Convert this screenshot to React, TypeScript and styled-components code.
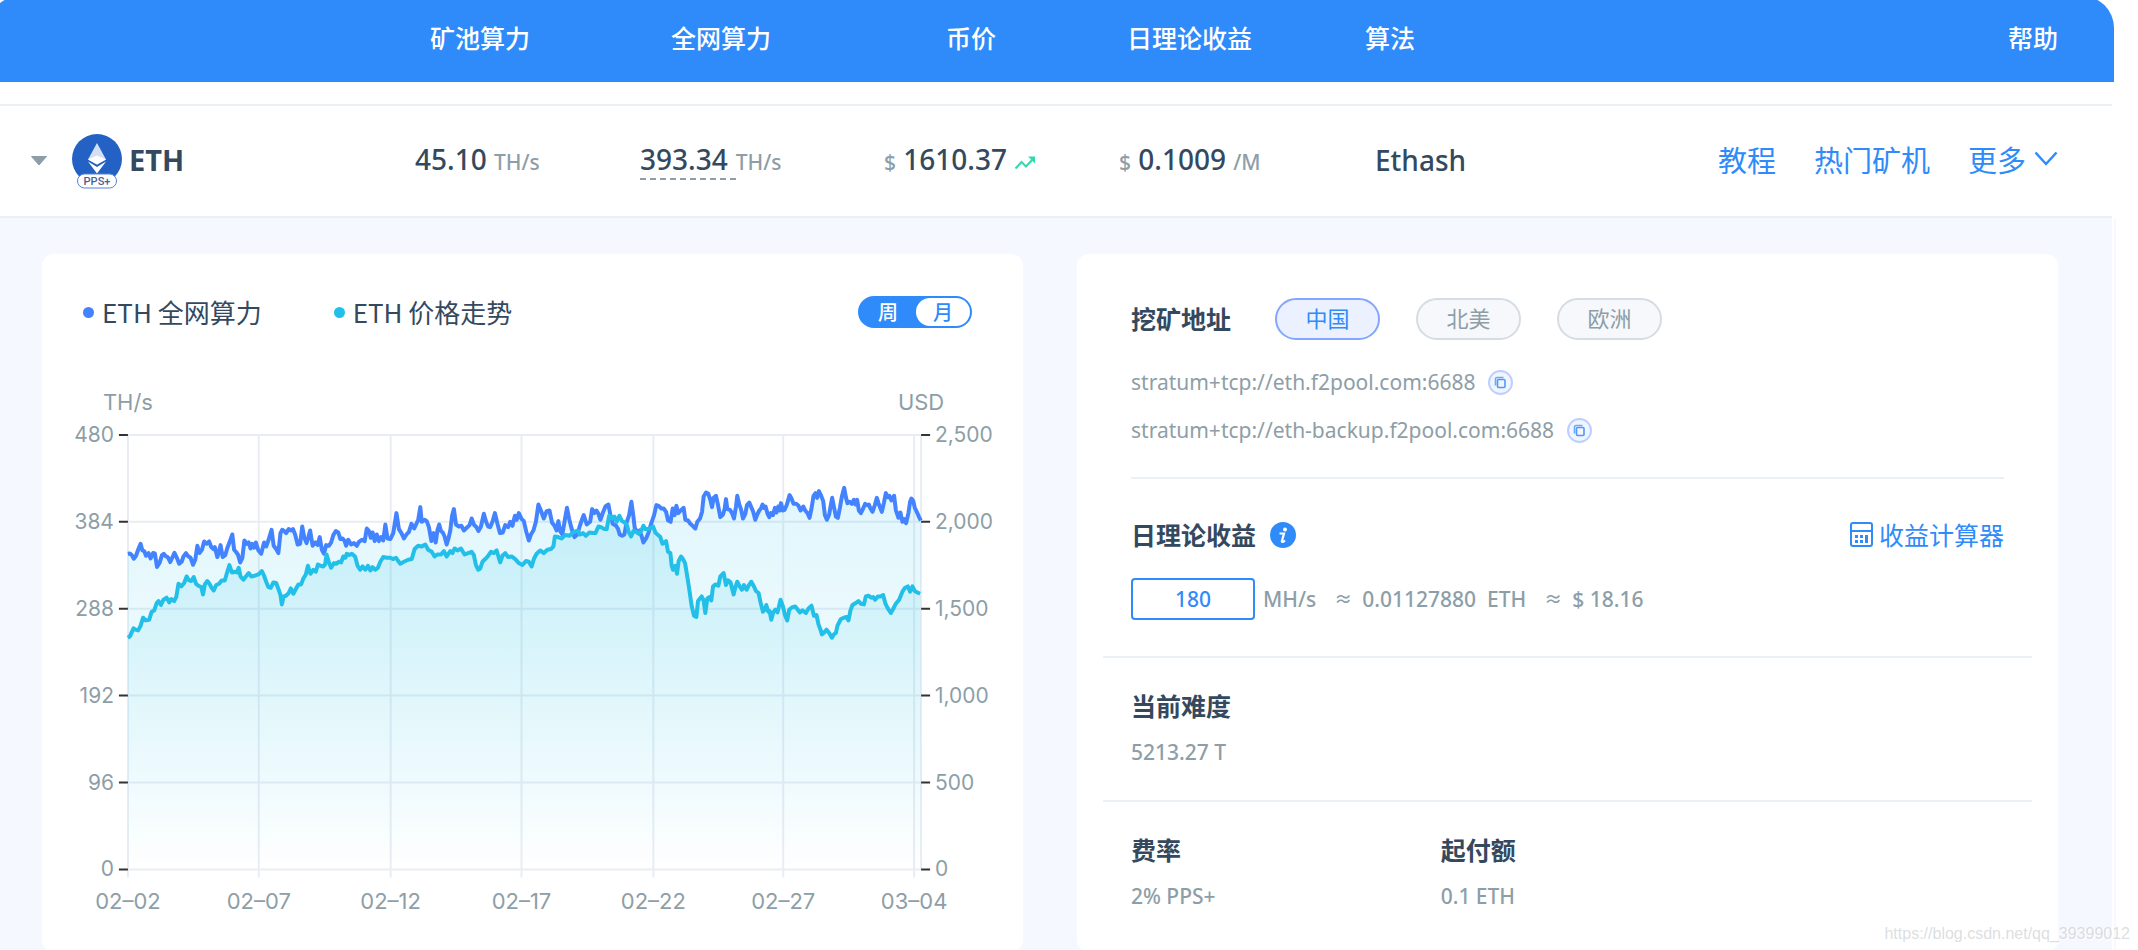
import React, { useState } from "react";
import styled, { createGlobalStyle } from "styled-components";

const latin = `"Noto Sans", "Noto Sans CJK SC", sans-serif`;
const han = `"Noto Sans CJK SC", "Noto Sans", sans-serif`;

const c = {
  blue: "#2f8bfa",
  ink: "#34495e",
  muted: "#8d9ea7",
  line: "#ebf0f4",
  bg: "#f5f8fe",
};

const Global = createGlobalStyle`
  * { box-sizing: border-box; }
  body { margin: 0; background: #fff; color: ${c.ink}; font-family: ${latin}; font-weight: 500; }
  button, input { font: inherit; margin: 0; }
  a { color: inherit; text-decoration: none; }
  h2, p { margin: 0; }
`;

const Page = styled.main`
  position: relative;
  overflow: hidden;
  padding-right: 24px;
`;

const PoolTable = styled.table`
  display: block;
  width: 100%;
`;

const Head = styled.thead`
  display: block;
  margin: -4px 0 0 -12px;
  padding-left: 12px;
  border-radius: 32px 32px 0 0;
  background: ${c.blue};
  color: #fff;
`;

const HeadRow = styled.tr`
  display: grid;
  grid-template-columns: 430fr 241fr 275fr 181fr 238fr 374fr 375fr;
  align-items: center;
  height: 86px;
`;

const HeadCell = styled.th<{ $end?: boolean }>`
  padding: ${(p) => (p.$end ? "0 56px 4px 0" : "0 0 4px")};
  text-align: ${(p) => (p.$end ? "right" : "left")};
  font: 500 25px/32px ${han};
  white-space: nowrap;
`;

const Body = styled.tbody`
  display: block;
  margin-right: 2px;
  padding-top: 22px;
`;

const CoinRow = styled.tr`
  display: grid;
  grid-template-columns: 415fr 225fr 244fr 235fr 256fr 300fr 437fr;
  align-items: center;
  height: 114px;
  border: solid ${c.line};
  border-width: 2px 0;
`;

const Cell = styled.td`
  padding: 0 0 2px;
  font-size: 28px;
  line-height: 36px;
  white-space: nowrap;
`;

const Unit = styled.span`
  color: ${c.muted};
  font-size: 21px;
`;

const Dashed = styled.span`
  padding-right: 8px;
  border-bottom: 2px dashed ${c.muted};
`;

const CoinCell = styled.td`
  display: flex;
  align-items: center;
  padding: 0 0 0 30px;
`;

const CaretButton = styled.button`
  display: flex;
  padding: 0;
  border: 0;
  background: none;
  cursor: pointer;
`;

const CoinLogo = styled.svg`
  margin: 2px 7px 0 24px;
`;

const CoinName = styled.b`
  padding-bottom: 2px;
  font-size: 29px;
  line-height: 36px;
`;

const LinkCell = styled.td`
  display: flex;
  justify-content: flex-end;
  gap: 38px;
  padding: 0 54px 4px 0;
  color: ${c.blue};
  font: 29px/40px ${han};
  white-space: nowrap;
`;

const MoreLink = styled.a`
  display: flex;
  align-items: center;
  gap: 8px;
`;

const Details = styled.section`
  display: grid;
  grid-template-columns: 1fr 1fr;
  gap: 54px;
  margin-right: 2px;
  padding: 36px 54px 0 42px;
  background: ${c.bg};
`;

const Edge = styled.div`
  box-shadow: 2px 0 0 #f6faff;
`;

const Card = styled.section`
  min-width: 0;
  border-radius: 12px;
  background: #fff;
`;

const ChartCard = styled(Card)`
  padding-top: 40px;
`;

const ChartHeader = styled.header`
  display: flex;
  align-items: center;
  gap: 72px;
  padding: 0 51px 0 41px;
`;

const Legend = styled.span<{ $dot: string }>`
  display: flex;
  align-items: center;
  gap: 8px;
  font: 26px/36px ${han};
  white-space: nowrap;

  &::before {
    width: 11px;
    height: 11px;
    border-radius: 50%;
    background: ${(p) => p.$dot};
    content: "";
  }
`;

const RangeSwitch = styled.div`
  display: flex;
  margin-left: auto;
  border: 2px solid ${c.blue};
  border-radius: 16px;
  background: ${c.blue};
`;

const RangeButton = styled.button<{ $on: boolean }>`
  width: ${(p) => (p.$on ? 54 : 56)}px;
  height: 28px;
  padding: 0;
  border: 0;
  border-radius: 14px;
  background: ${(p) => (p.$on ? "#fff" : c.blue)};
  color: ${(p) => (p.$on ? c.blue : "#fff")};
  font: 500 20px/28px ${han};
  cursor: pointer;
`;

const ChartSvg = styled.svg`
  display: block;
  width: 100%;
  height: auto;
  font-family: Inter, sans-serif;
  font-size: 21px;
  font-weight: 400;
  fill: ${c.muted};
`;

const InfoCard = styled(Card)`
  padding: 44px 26px 8px;
`;

const Block = styled.div`
  padding: 0 28px;
`;

const AddressBlock = styled.div`
  padding-bottom: 31px;
  border-bottom: 2px solid ${c.line};
`;

const Row = styled.div`
  display: flex;
  align-items: center;
`;

const Title = styled.h2`
  padding-bottom: 2px;
  font: 700 25px/34px ${han};
  white-space: nowrap;
`;

const Regions = styled.div`
  display: flex;
  gap: 36px;
  margin-left: 44px;
`;

const Pill = styled.button<{ $on: boolean }>`
  min-width: 105px;
  height: 42px;
  padding: 0 28px 4px;
  border: 2px solid ${(p) => (p.$on ? "#85a5ff" : "#d5dce4")};
  border-radius: 21px;
  background: ${(p) => (p.$on ? "#ebf1ff" : "#f7f8fb")};
  color: ${(p) => (p.$on ? c.blue : c.muted)};
  font: 22px/34px ${han};
  cursor: pointer;
`;

const Addresses = styled.div`
  display: grid;
  gap: 16px;
  margin-top: 26px;
`;

const Address = styled.div`
  display: flex;
  align-items: center;
  gap: 13px;
  color: ${c.muted};
  font-size: 21px;
  font-weight: 400;
  line-height: 32px;
  white-space: nowrap;
`;

const IconButton = styled.button`
  display: flex;
  padding: 0;
  border: 0;
  background: none;
  cursor: pointer;
`;

const ProfitHead = styled(Row)`
  gap: 14px;
  padding-top: 38px;
`;

const CalcLink = styled.a`
  display: flex;
  align-items: center;
  gap: 6px;
  margin-left: auto;
  color: ${c.blue};
  font: 25px/34px ${han};
  padding-bottom: 2px;
  white-space: nowrap;
`;

const Estimate = styled(Row)`
  margin: 25px 0 36px;
  color: ${c.muted};
  font-size: 21px;
  line-height: 32px;
  white-space: pre;
`;

const RateInput = styled.input`
  width: 124px;
  height: 42px;
  margin-right: 8px;
  border: 2px solid ${c.blue};
  border-radius: 4px;
  background: #fff;
  color: ${c.blue};
  text-align: center;
  outline: 0;
`;

const Approx = styled.span`
  margin: 0 10px 0 18px;
  font-size: 18px;
`;

const Facts = styled.div`
  display: grid;
  grid-template-columns: repeat(3, 1fr);
  border-top: 2px solid ${c.line};
`;

const Fact = styled.div`
  padding: 30px 28px 32px;
`;

const FactValue = styled.p`
  margin-top: 12px;
  color: ${c.muted};
  font-size: 21px;
  line-height: 32px;
`;

const Watermark = styled.span`
  position: absolute;
  right: 8px;
  bottom: 6px;
  color: rgba(190, 194, 200, 0.55);
  font: 400 16px/24px "Liberation Sans", sans-serif;
  text-shadow: 1px 1px 0 #fff;
`;

/* Chart data: x/y pairs in plot units, listed in two halves with their own x resolution. */
const hashrate = {
  early: "274,942 280,941 285,946 291,957 297,948 303,930 310,912 315,932 320,934 325,948 332,940 338,956 345,940 350,941 356,982 363,970 370,946 375,942 381,950 386,952 393,967 400,950 405,939 412,955 418,972 425,966 430,950 437,940 443,949 450,954 457,975 463,960 469,918 475,940 482,930 488,905 495,912 502,905 508,922 514,928 518,922 525,952 530,935 534,916 540,952 547,946 553,925 560,905 567,884 572,930 577,936 583,945 589,968 595,955 601,902 608,912 613,908 618,926 623,912 628,924 633,908 640,932 648,942 656,908 662,920 668,902 677,870 683,918 690,928 696,940 702,880 707,870 713,874 718,880 725,868 732,872 737,868 743,884 750,914 757,912 763,860 769,894 775,910 780,892 785,872 792,918 800,908 806,916 812,892 818,930 824,942 830,916 838,918 844,908 850,886 857,874 864,878 870,898 876,896 882,904 886,918 892,900 900,914 908,910 916,918 922,906 930,900 938,904 944,866 950,874 955,894 960,878 966,904 972,884 978,904 984,892 990,902 996,854 1002,896 1010,898 1018,880 1027,820 1034,868 1041,880 1048,896 1055,884 1062,876 1069,852 1077,866 1082,854 1088,840 1094,802 1098,846 1106,840 1112,844 1118,862 1125,904 1131,880 1137,908 1142,870 1147,854 1152,874 1157,878 1162,890 1168,914 1173,896 1178,872 1183,828 1188,808 1194,854 1202,860 1209,858 1216,872 1224,864 1232,856 1238,836 1245,856 1251,862 1257,874 1264,860 1272,822 1279,848 1284,860 1290,862 1296,846 1303,820 1310,852 1317,880 1325,878 1332,856 1340,862 1346,846 1352,858 1359,828 1364,840 1370,820 1378,838 1384,844 1391,876 1398,902 1404,884 1411,872 1418,846 1425,794 1432,812 1440,836 1448,814 1456,812 1463,848 1470,858 1476,872 1481,844 1486,874 1492,884 1498,846 1505,804 1511,836 1518,866 1526,892 1534,884 1541,858 1548,836",
  late: "73,826 82,854 92,846 98,808 105,820 111,812 117,822 123,840 130,820 138,800 147,794 153,826 160,852 170,858 176,868 181,884 188,888 195,884 201,850 209,826 216,786 222,830 226,864 234,878 241,872 248,894 252,908 260,896 267,880 275,852 284,826 291,796 298,798 306,806 313,806 320,816 326,842 334,846 340,806 346,826 351,798 357,820 364,812 373,804 378,840 386,842 393,852 400,858 408,866 414,846 422,836 428,816 433,770 440,758 447,762 453,780 458,802 463,774 470,768 477,800 483,832 491,824 496,808 500,778 504,808 512,810 518,820 524,836 530,800 534,768 540,794 545,808 551,836 558,822 563,796 570,788 575,800 581,814 588,840 594,824 600,812 605,806 610,794 614,804 619,800 625,822 630,832 635,820 641,826 647,804 652,818 657,800 662,812 665,790 671,812 676,810 683,794 691,766 697,776 703,792 711,792 718,798 724,812 732,800 738,812 745,820 751,834 757,806 763,768 769,760 774,774 779,754 785,766 792,784 797,826 803,840 810,824 815,794 819,774 824,800 830,830 836,834 842,804 848,770 855,744 860,772 865,790 872,786 878,792 884,780 889,794 894,780 899,812 905,820 912,806 918,792 924,796 929,794 934,806 940,816 947,796 953,774 960,796 968,816 974,790 980,760 986,772 991,768 997,782 1005,768 1010,810 1018,834 1024,818 1030,846 1036,838 1041,850 1048,820 1053,786 1057,776 1062,782 1067,804 1074,818 1080,832 1085,842",
};

const price = {
  early: "274,1194 280,1190 285,1178 290,1166 296,1170 303,1172 310,1158 317,1134 324,1142 334,1140 341,1116 348,1112 355,1090 360,1084 367,1096 374,1080 383,1074 390,1088 396,1078 404,1084 410,1072 416,1032 424,1040 432,1030 439,1010 446,1022 452,1024 459,1012 465,1032 472,1038 480,1042 485,1064 490,1034 497,1024 503,1032 509,1044 515,1052 522,1036 530,1032 537,1022 546,1022 552,1000 559,976 566,998 574,996 580,998 585,984 590,1010 598,1020 605,1010 613,1000 620,1010 630,1008 640,1004 650,994 656,1008 662,1026 668,1042 675,1044 682,1028 690,1030 697,1050 702,1066 706,1094 711,1070 718,1068 725,1060 731,1046 738,1062 745,1048 752,1034 760,1034 766,1016 773,1004 779,978 786,1002 794,990 801,996 807,974 814,978 822,980 827,974 831,944 838,968 844,984 852,970 858,972 866,966 872,968 878,950 884,954 888,942 895,946 902,942 911,950 918,978 925,990 932,980 940,990 947,978 954,992 960,982 967,990 975,984 982,966 990,952 1000,954 1010,954 1018,958 1026,954 1032,964 1038,972 1048,966 1060,960 1070,958 1078,928 1088,918 1098,920 1108,914 1116,930 1126,936 1134,950 1142,944 1152,944 1160,934 1168,950 1178,934 1184,940 1190,926 1198,932 1208,926 1218,944 1228,940 1238,936 1244,946 1250,976 1256,990 1262,986 1268,966 1276,958 1283,950 1292,936 1300,940 1308,932 1318,968 1324,948 1332,940 1340,952 1350,950 1360,958 1370,970 1380,976 1390,964 1398,966 1406,980 1413,956 1420,942 1430,932 1440,940 1450,930 1460,928 1467,920 1471,890 1480,892 1490,896 1500,886 1512,888 1522,878 1534,872 1542,884 1550,880 1558,888 1566,880",
  late: "90,878 100,880 108,880 117,860 125,862 135,868 142,868 149,828 158,836 165,830 172,846 180,828 188,844 196,848 203,858 208,876 215,890 222,874 230,876 238,882 245,874 252,858 258,868 266,868 274,864 281,860 288,878 296,886 303,892 309,912 320,904 326,936 333,940 337,978 341,990 348,978 353,1002 358,964 365,950 372,960 377,970 383,1006 390,1050 397,1098 404,1128 411,1132 416,1084 422,1076 427,1070 433,1082 438,1120 444,1076 450,1072 456,1082 461,1040 468,1034 477,1038 483,1010 493,1000 500,1036 506,1022 514,1028 523,1064 529,1040 534,1026 541,1040 548,1050 554,1036 562,1050 569,1036 576,1026 584,1040 590,1054 598,1060 604,1088 611,1116 617,1110 621,1096 627,1116 631,1114 636,1140 642,1118 648,1110 655,1118 664,1080 671,1100 677,1126 684,1142 690,1110 697,1104 708,1100 714,1108 722,1118 730,1112 740,1120 748,1106 757,1098 764,1128 772,1126 778,1154 784,1170 788,1184 795,1178 802,1170 810,1180 818,1194 824,1184 830,1180 835,1158 845,1138 855,1134 862,1132 868,1142 874,1112 880,1096 890,1090 898,1084 905,1092 914,1094 920,1070 928,1068 936,1074 942,1072 948,1080 956,1070 964,1070 972,1066 979,1092 986,1106 995,1120 1002,1108 1010,1092 1020,1080 1030,1056 1038,1044 1046,1040 1053,1056 1060,1040 1067,1054 1075,1058 1083,1062",
};

type Series = { early: string; late: string };

const half = (s: string, x0: number, unit: number) =>
  s.split(" ").map((p) => {
    const [x, y] = p.split(",").map(Number);
    return `${(x0 + x / unit).toFixed(1)},${(y / 3 - 90).toFixed(1)}`;
  });

const linePath = (s: Series) => "M" + [...half(s.early, -12, 2.8), ...half(s.late, 518, 3)].join("L");

const TOP = 105;
const STEP = 87;
const BOTTOM = TOP + STEP * 5;
const LEFT = 86;
const RIGHT = 880;

const leftTicks = ["480", "384", "288", "192", "96", "0"];
const rightTicks = ["2,500", "2,000", "1,500", "1,000", "500", "0"];
const days: [string, number][] = [
  ["02–02", 86],
  ["02–07", 217],
  ["02–12", 349],
  ["02–17", 480],
  ["02–22", 612],
  ["02–27", 742],
  ["03–04", 873],
];

function TrendChart() {
  const hash = linePath(hashrate);
  const usd = linePath(price);
  const close = `L${RIGHT},${BOTTOM}L${LEFT},${BOTTOM}Z`;
  return (
    <ChartSvg viewBox="0 0 982 618" role="img" aria-label="ETH 全网算力 / ETH 价格走势">
      <defs>
        <linearGradient id="hashFill" x1="0" y1="0" x2="0" y2="1">
          <stop offset="0" stopColor="#22c1e8" stopOpacity="0.14" />
          <stop offset="1" stopColor="#22c1e8" stopOpacity="0" />
        </linearGradient>
        <linearGradient id="usdFill" x1="0" y1="0" x2="0" y2="1">
          <stop offset="0" stopColor="#22c1e8" stopOpacity="0.16" />
          <stop offset="1" stopColor="#22c1e8" stopOpacity="0" />
        </linearGradient>
      </defs>
      <g stroke="#e9edf3" strokeWidth="2">
        {leftTicks.map((_, i) => (
          <path key={i} d={`M${LEFT} ${TOP + STEP * i}H${RIGHT}`} />
        ))}
        {days.map(([d, x]) => (
          <path key={d} d={`M${x} ${TOP}V${BOTTOM + 8}`} />
        ))}
        <path d={`M${RIGHT} ${TOP}V${BOTTOM}`} />
      </g>
      <g stroke="#333" strokeWidth="2">
        {leftTicks.map((_, i) => (
          <path key={i} d={`M${LEFT - 9} ${TOP + STEP * i}H${LEFT}M${RIGHT} ${TOP + STEP * i}h9`} />
        ))}
      </g>
      <path d={hash + close} fill="url(#hashFill)" />
      <path d={usd + close} fill="url(#usdFill)" />
      <path d={hash} fill="none" stroke="#4383ff" strokeWidth="4" strokeLinejoin="round" />
      <path d={usd} fill="none" stroke="#22bfe8" strokeWidth="4" strokeLinejoin="round" />
      <text x="86" y="80" textAnchor="middle" fontSize="22">TH/s</text>
      <text x="880" y="80" textAnchor="middle" fontSize="22">USD</text>
      {leftTicks.map((t, i) => (
        <text key={t} x="72" y={TOP + STEP * i + 7} textAnchor="end">{t}</text>
      ))}
      {rightTicks.map((t, i) => (
        <text key={t} x="894" y={TOP + STEP * i + 7}>{t}</text>
      ))}
      {days.map(([d, x]) => (
        <text key={d} x={x} y={BOTTOM + 40} textAnchor="middle" fontSize="22">{d}</text>
      ))}
    </ChartSvg>
  );
}

function EthLogo() {
  return (
    <CoinLogo width="50" height="56" viewBox="0 0 50 56" aria-hidden="true">
      <circle cx="25" cy="25" r="25" fill="#2362c4" />
      <path d="M25 9L16 25.500L25 30.500L34 25.500Z" fill="#d3dff2" />
      <path d="M16 25.500L25 21.500L34 25.500L25 30.500Z" fill="#fff" />
      <path d="M16 27.500L25 33L34 27.500L25 39.500Z" fill="#fff" />
      <rect x="5.500" y="40" width="39" height="14" rx="7" fill="#fff" stroke="#5484d0" />
      <text x="25" y="51" textAnchor="middle" fontSize="11" fontFamily="Roboto, sans-serif" fill="#4a5f8f">PPS+</text>
    </CoinLogo>
  );
}

function CopyIcon() {
  return (
    <svg width="25" height="25" viewBox="0 0 25 25" fill="none" aria-hidden="true">
      <circle cx="12.500" cy="12.500" r="11.500" fill="#f1f5ff" stroke="#bccfff" strokeWidth="2" />
      <path d="M7.500 15.500V9A1.500 1.500 0 0 1 9 7.500H15.500" stroke="#69abfb" strokeWidth="1.600" />
      <rect x="9.500" y="9.500" width="7.500" height="8" rx="1" stroke="#4c9bfb" strokeWidth="1.600" />
    </svg>
  );
}

const regions = ["中国", "北美", "欧洲"];
const addresses = ["stratum+tcp://eth.f2pool.com:6688", "stratum+tcp://eth-backup.f2pool.com:6688"];

export default function App() {
  const [region, setRegion] = useState("中国");
  const [range, setRange] = useState("月");
  const [rate, setRate] = useState("180");

  return (
    <Page>
      <Global />
      <PoolTable>
        <Head>
          <HeadRow>
            <HeadCell aria-label="币种" />
            <HeadCell>矿池算力</HeadCell>
            <HeadCell>全网算力</HeadCell>
            <HeadCell>币价</HeadCell>
            <HeadCell>日理论收益</HeadCell>
            <HeadCell>算法</HeadCell>
            <HeadCell $end>帮助</HeadCell>
          </HeadRow>
        </Head>
        <Body>
          <CoinRow>
            <CoinCell>
              <CaretButton type="button" aria-label="收起">
                <svg width="18" height="12" viewBox="0 0 18 12">
                  <path d="M1.500 1.500H16.500L9 10Z" fill={c.muted} stroke={c.muted} strokeLinejoin="round" />
                </svg>
              </CaretButton>
              <EthLogo />
              <CoinName>ETH</CoinName>
            </CoinCell>
            <Cell>45.10 <Unit>TH/s</Unit></Cell>
            <Cell><Dashed>393.34</Dashed><Unit>TH/s</Unit></Cell>
            <Cell>
              <Unit>$</Unit> 1610.37{" "}
              <svg width="22" height="14" viewBox="0 0 22 14" fill="none" aria-hidden="true">
                <path d="M1.500 12.500L7.500 6L12 10.500L19 3" stroke="#35d8ae" strokeWidth="2" />
                <path d="M14 .5H21V7.500Z" fill="#35d8ae" />
              </svg>
            </Cell>
            <Cell><Unit>$</Unit> 0.1009 <Unit>/M</Unit></Cell>
            <Cell>Ethash</Cell>
            <LinkCell>
              <a href="#tutorial">教程</a>
              <a href="#miners">热门矿机</a>
              <MoreLink href="#more">
                更多
                <svg width="24" height="16" viewBox="0 0 24 16" fill="none" aria-hidden="true">
                  <path d="M1.500 1.500L12 13L22.500 1.500" stroke={c.blue} strokeWidth="2.500" />
                </svg>
              </MoreLink>
            </LinkCell>
          </CoinRow>
        </Body>
      </PoolTable>

      <Edge>
        <Details>
          <ChartCard>
            <ChartHeader>
              <Legend $dot="#4383ff">ETH 全网算力</Legend>
              <Legend $dot="#22bfe8">ETH 价格走势</Legend>
              <RangeSwitch>
                {["周", "月"].map((r) => (
                  <RangeButton key={r} type="button" $on={r === range} aria-pressed={r === range} onClick={() => setRange(r)}>
                    {r}
                  </RangeButton>
                ))}
              </RangeSwitch>
            </ChartHeader>
            <TrendChart />
          </ChartCard>

          <InfoCard>
            <Block>
              <AddressBlock>
                <Row>
                  <Title>挖矿地址</Title>
                  <Regions>
                    {regions.map((r) => (
                      <Pill key={r} type="button" $on={r === region} aria-pressed={r === region} onClick={() => setRegion(r)}>
                        {r}
                      </Pill>
                    ))}
                  </Regions>
                </Row>
                <Addresses>
                  {addresses.map((a) => (
                    <Address key={a}>
                      {a}
                      <IconButton type="button" aria-label={`复制 ${a}`}>
                        <CopyIcon />
                      </IconButton>
                    </Address>
                  ))}
                </Addresses>
              </AddressBlock>
              <ProfitHead>
                <Title>日理论收益</Title>
                <svg width="26" height="26" viewBox="0 0 26 26" aria-hidden="true">
                  <circle cx="13" cy="13" r="13" fill={c.blue} />
                  <circle cx="15" cy="7.500" r="2" fill="#fff" />
                  <path d="M9.500 11.500H14L11.800 19.500Q12.500 20.800 15 18.500" fill="none" stroke="#fff" strokeWidth="2.200" />
                </svg>
                <CalcLink href="#calculator">
                  <svg width="23" height="25" viewBox="0 0 23 25" fill="none" aria-hidden="true">
                    <rect x="1" y="1" width="21" height="23" rx="2" stroke={c.blue} strokeWidth="2" />
                    <path d="M1 9H22" stroke={c.blue} strokeWidth="2" />
                    <path d="M5 13h3v3H5zM10 13h3v3h-3zM5 18h3v3H5zM10 18h3v3h-3zM15 13h3v8h-3z" fill={c.blue} />
                  </svg>
                  收益计算器
                </CalcLink>
              </ProfitHead>
              <Estimate>
                <RateInput aria-label="MH/s" value={rate} onChange={(e) => setRate(e.target.value)} />
                <span>MH/s</span>
                <Approx>≈</Approx>
                <span>0.01127880  ETH</span>
                <Approx>≈</Approx>
                <span>$ 18.16</span>
              </Estimate>
            </Block>
            <Facts>
              <Fact>
                <Title>当前难度</Title>
                <FactValue>5213.27 T</FactValue>
              </Fact>
            </Facts>
            <Facts>
              <Fact>
                <Title>费率</Title>
                <FactValue>2% PPS+</FactValue>
              </Fact>
              <Fact>
                <Title>起付额</Title>
                <FactValue>0.1 ETH</FactValue>
              </Fact>
            </Facts>
          </InfoCard>
        </Details>
      </Edge>
      <Watermark>https://blog.csdn.net/qq_39399012</Watermark>
    </Page>
  );
}
